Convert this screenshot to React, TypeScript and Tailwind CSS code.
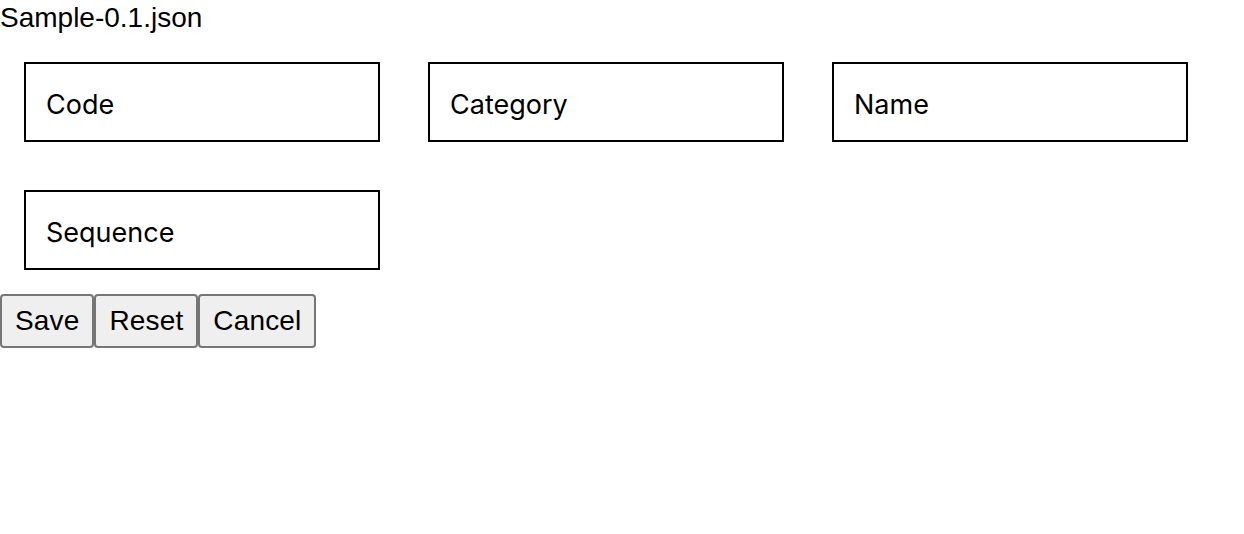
const fields = ["Code", "Category", "Name", "Sequence"];

function Field({ label }: { label: string }) {
  return (
    <div className="flex h-[80px] w-[356px] items-center border-2 border-black bg-white pl-5 pt-[4px]">
      <span className="font-['Inter',sans-serif] text-[27px] leading-none text-black">{label}</span>
    </div>
  );
}

export default function App() {
  return (
    <div className="min-h-[534px] bg-white text-black">
      <div className="pt-[2px] font-['Liberation_Sans',Arial,sans-serif] text-[28px] leading-[32px]">Sample-0.1.json</div>
      <div className="grid w-max grid-cols-[356px_356px_356px] gap-x-12 gap-y-12 pl-6 pt-[28px]">
        {fields.map((f) => (
          <Field key={f} label={f} />
        ))}
      </div>
      <div className="mt-6 flex">
        {["Save", "Reset", "Cancel"].map((b) => (
          <button
            key={b}
            type="button"
            className="rounded-[4px] border-2 border-[#767676] bg-[#efefef] px-[13px] py-[9px] font-['Liberation_Sans',Arial,sans-serif] text-[28px] leading-[32px] tracking-[0.15px] text-black"
          >
            {b}
          </button>
        ))}
      </div>
    </div>
  );
}
